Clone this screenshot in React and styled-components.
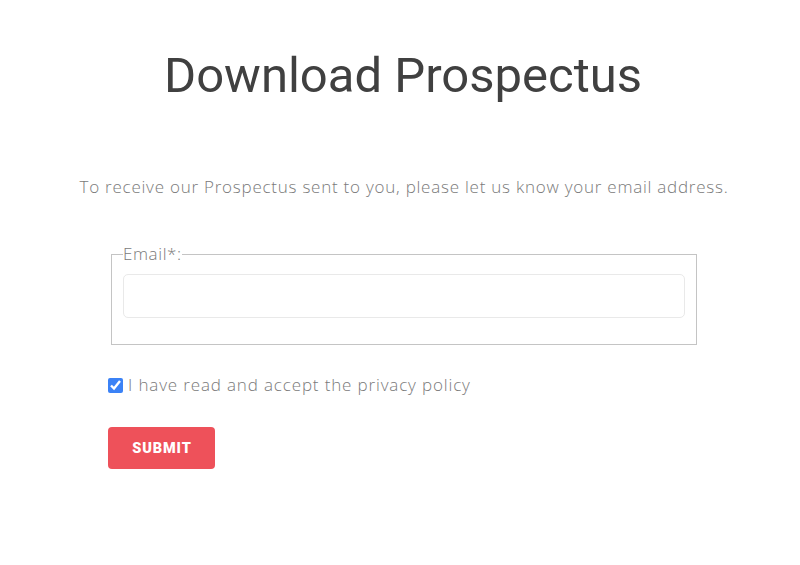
import React, { useState } from 'react';
import styled, { createGlobalStyle } from 'styled-components';

const GlobalStyle = createGlobalStyle`
  html, body {
    margin: 0;
    padding: 0;
    background: #fff;
  }
  body {
    font-family: 'Open Sans', 'Liberation Sans', sans-serif;
  }
`;

const Page = styled.main`
  width: 800px;
  min-height: 565px;
  box-sizing: border-box;
  padding-top: 46px;
  display: flex;
  flex-direction: column;
  align-items: center;
`;

const Title = styled.h1`
  margin: 0 0 0 6px;
  font-family: Roboto, sans-serif;
  font-weight: 400;
  font-size: 49px;
  line-height: 60px;
  color: #404040;
`;

const Intro = styled.p`
  margin: 69px 0 0 8px;
  font-family: 'Open Sans', sans-serif;
  font-weight: 300;
  font-size: 17px;
  line-height: 24px;
  color: #7a7a7a;
  letter-spacing: 0.76px;
`;

const Form = styled.form`
  width: 592px;
  margin: 45px 0 0 8px;
  display: flex;
  flex-direction: column;
  align-items: flex-start;
`;

const FieldSet = styled.fieldset`
  box-sizing: border-box;
  width: 586px;
  margin: 0 0 0 3px;
  padding: 0 11px 26px;
  border: 1px solid #c4c4c4;
`;

const Legend = styled.legend`
  padding: 0;
  font-family: 'Open Sans', sans-serif;
  font-weight: 300;
  font-size: 17px;
  line-height: 20px;
  letter-spacing: 0.6px;
  color: #7a7a7a;
`;

const Input = styled.input`
  box-sizing: border-box;
  width: 100%;
  height: 44px;
  margin-top: 10px;
  border: 1px solid #e9e9e9;
  border-radius: 5px;
  background: #fff;
  outline: none;
  font-size: 15px;
  padding: 0 12px;
`;

const CheckRow = styled.label`
  display: flex;
  align-items: center;
  margin-top: 29px;
  gap: 5px;
  font-family: 'Open Sans', sans-serif;
  font-weight: 300;
  font-size: 17px;
  line-height: 22px;
  letter-spacing: 0.85px;
  color: #7a7a7a;
  cursor: pointer;
`;

const Check = styled.input`
  width: 15px;
  height: 15px;
  margin: 0;
  accent-color: #3b82f6;
`;

const Submit = styled.button`
  margin-top: 31px;
  width: 107px;
  height: 42px;
  border: none;
  border-radius: 4px;
  background: #ee515a;
  color: #fff;
  font-family: Roboto, sans-serif;
  font-weight: 900;
  font-size: 14.5px;
  letter-spacing: 0.9px;
  padding: 0 0 0 1px;
  cursor: pointer;
`;

const App = () => {
  const [email, setEmail] = useState('');
  const [agree, setAgree] = useState(true);

  return (
    <>
      <GlobalStyle />
      <Page>
        <Title>Download Prospectus</Title>
        <Intro>To receive our Prospectus sent to you, please let us know your email address.</Intro>
        <Form onSubmit={(e) => e.preventDefault()}>
          <FieldSet>
            <Legend>Email*:</Legend>
            <Input type="email" value={email} onChange={(e) => setEmail(e.target.value)} />
          </FieldSet>
          <CheckRow>
            <Check type="checkbox" checked={agree} onChange={(e) => setAgree(e.target.checked)} />
            I have read and accept the privacy policy
          </CheckRow>
          <Submit type="submit">SUBMIT</Submit>
        </Form>
      </Page>
    </>
  );
};

export default App;
